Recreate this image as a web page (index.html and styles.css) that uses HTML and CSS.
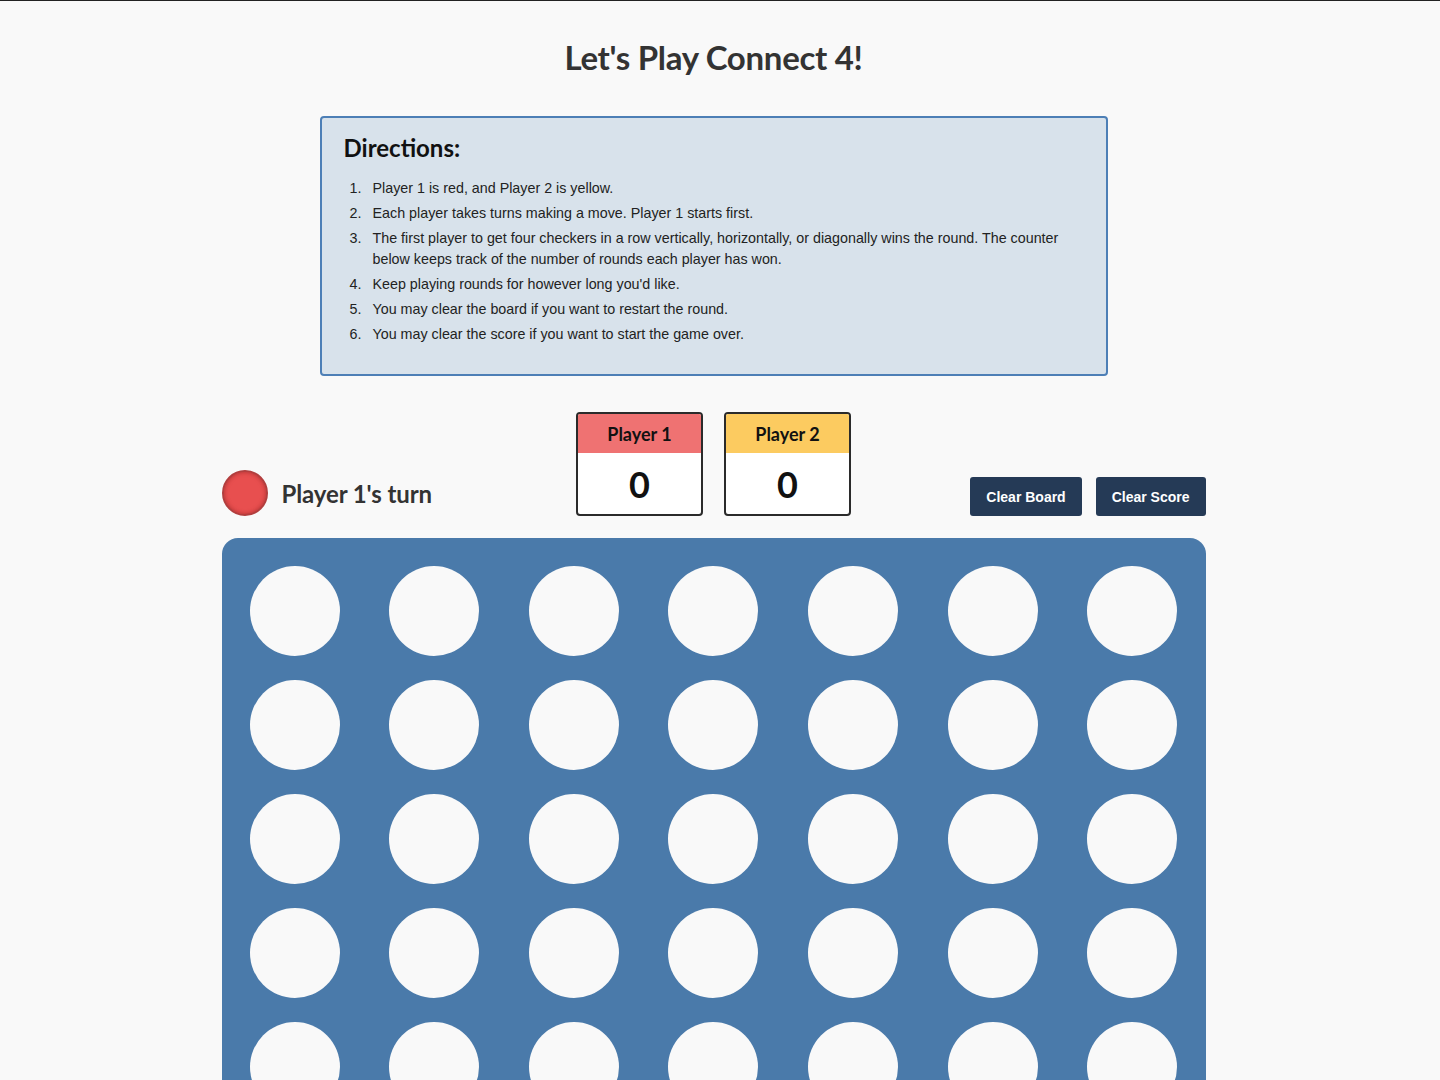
FILE: index.html
```html
<!DOCTYPE html>
<html lang="en">
<head>
<meta charset="utf-8">
<title>Connect 4</title>
<link rel="stylesheet" href="styles.css">
</head>
<body>
<main class="page">
  <h1 class="title">Let's Play Connect 4!</h1>

  <section class="directions">
    <h2 class="directions-title">Directions:</h2>
    <ol class="directions-list">
      <li>Player 1 is red, and Player 2 is yellow.</li>
      <li>Each player takes turns making a move. Player 1 starts first.</li>
      <li>The first player to get four checkers in a row vertically, horizontally, or diagonally wins the round. The counter below keeps track of the number of rounds each player has won.</li>
      <li>Keep playing rounds for however long you'd like.</li>
      <li>You may clear the board if you want to restart the round.</li>
      <li>You may clear the score if you want to start the game over.</li>
    </ol>
  </section>

  <section class="game">
    <div class="controls">
      <div class="turn">
        <span class="turn-chip"></span>
        <span class="turn-text">Player 1's turn</span>
      </div>
      <div class="scores">
        <div class="score-card">
          <div class="score-head p1">Player 1</div>
          <div class="score-value">0</div>
        </div>
        <div class="score-card">
          <div class="score-head p2">Player 2</div>
          <div class="score-value">0</div>
        </div>
      </div>
      <div class="buttons">
        <button class="btn">Clear Board</button>
        <button class="btn">Clear Score</button>
      </div>
    </div>

    <div class="board">
      <div class="cell"></div><div class="cell"></div><div class="cell"></div><div class="cell"></div><div class="cell"></div><div class="cell"></div><div class="cell"></div>
      <div class="cell"></div><div class="cell"></div><div class="cell"></div><div class="cell"></div><div class="cell"></div><div class="cell"></div><div class="cell"></div>
      <div class="cell"></div><div class="cell"></div><div class="cell"></div><div class="cell"></div><div class="cell"></div><div class="cell"></div><div class="cell"></div>
      <div class="cell"></div><div class="cell"></div><div class="cell"></div><div class="cell"></div><div class="cell"></div><div class="cell"></div><div class="cell"></div>
      <div class="cell"></div><div class="cell"></div><div class="cell"></div><div class="cell"></div><div class="cell"></div><div class="cell"></div><div class="cell"></div>
      <div class="cell"></div><div class="cell"></div><div class="cell"></div><div class="cell"></div><div class="cell"></div><div class="cell"></div><div class="cell"></div>
    </div>
  </section>
</main>
</body>
</html>
```

FILE: styles.css
```css
html {
  border-top: 1px solid #222;
  background: #f9f9f9;
}

body {
  margin: 0;
  padding: 0 13px 0 0;
  background: #f9f9f9;
  color: #333;
  font-family: "Liberation Sans", Arial, sans-serif;
}

.page {
  display: flex;
  flex-direction: column;
  align-items: center;
}

.title {
  margin: 36px 0 0;
  font-family: Lato, "Open Sans", sans-serif;
  font-weight: 700;
  font-size: 33px;
  line-height: 40px;
  color: #333;
  letter-spacing: -0.3px;
}

.directions {
  box-sizing: border-box;
  width: 788px;
  margin-top: 39px;
  padding: 14px 22px 29px;
  background: #d8e2eb;
  border: 2px solid #4d7fb6;
  border-radius: 4px;
  color: #222;
}

.directions-title {
  margin: 0 0 14px;
  font-family: Lato, "Open Sans", sans-serif;
  font-weight: 700;
  font-size: 24px;
  line-height: 32px;
  color: #111;
}

.directions-list {
  margin: 0;
  padding: 0;
  list-style: none;
  counter-reset: step;
  font-size: 14.3px;
  line-height: 21px;
}

.directions-list li {
  counter-increment: step;
  display: grid;
  grid-template-columns: 29px 1fr;
  margin-bottom: 4px;
}

.directions-list li::before {
  content: counter(step) ".";
  padding-left: 6px;
}

.directions-list li:last-child {
  margin-bottom: 0;
}

.game {
  width: 984px;
  margin-top: 36px;
}

.controls {
  display: grid;
  grid-template-columns: 1fr auto 1fr;
  align-items: end;
}

.turn {
  display: flex;
  align-items: center;
  gap: 14px;
}

.turn-chip {
  box-sizing: border-box;
  width: 46px;
  height: 46px;
  border-radius: 50%;
  background: #e84f4f;
  border: 2px solid #b23e3e;
  box-shadow: inset 0 0 4px rgba(120, 20, 20, 0.5);
}

.turn-text {
  font-family: Lato, "Open Sans", sans-serif;
  font-weight: 700;
  font-size: 24px;
  color: #333;
  letter-spacing: -0.1px;
}

.scores {
  display: flex;
  gap: 21px;
}

.score-card {
  box-sizing: border-box;
  width: 127px;
  height: 104px;
  border: 2px solid #2b2b2b;
  border-radius: 4px;
  overflow: hidden;
  background: #fff;
  display: flex;
  flex-direction: column;
}

.score-head {
  height: 39px;
  display: flex;
  align-items: center;
  justify-content: center;
  font-family: Lato, "Open Sans", sans-serif;
  font-weight: 700;
  font-size: 18px;
  color: #111;
}

.score-head.p1 {
  background: #ef7272;
}

.score-head.p2 {
  background: #fccb60;
}

.score-value {
  flex: 1;
  display: flex;
  align-items: center;
  justify-content: center;
  font-family: Lato, "Open Sans", sans-serif;
  font-weight: 700;
  font-size: 36px;
  color: #111;
}

.buttons {
  display: flex;
  justify-content: flex-end;
  gap: 14px;
}

.btn {
  height: 39px;
  padding: 0 16px;
  border: none;
  border-radius: 3px;
  background: #253a56;
  color: #fff;
  font-family: "Liberation Sans", Arial, sans-serif;
  font-weight: 700;
  font-size: 14px;
}

.board {
  margin-top: 22px;
  box-sizing: border-box;
  padding: 28px 28px;
  background: #4a7aaa;
  border-radius: 16px;
  display: grid;
  grid-template-columns: repeat(7, 90px);
  justify-content: space-between;
  row-gap: 24px;
}

.cell {
  width: 90px;
  height: 90px;
  border-radius: 50%;
  background: #f9f9f9;
}
```
